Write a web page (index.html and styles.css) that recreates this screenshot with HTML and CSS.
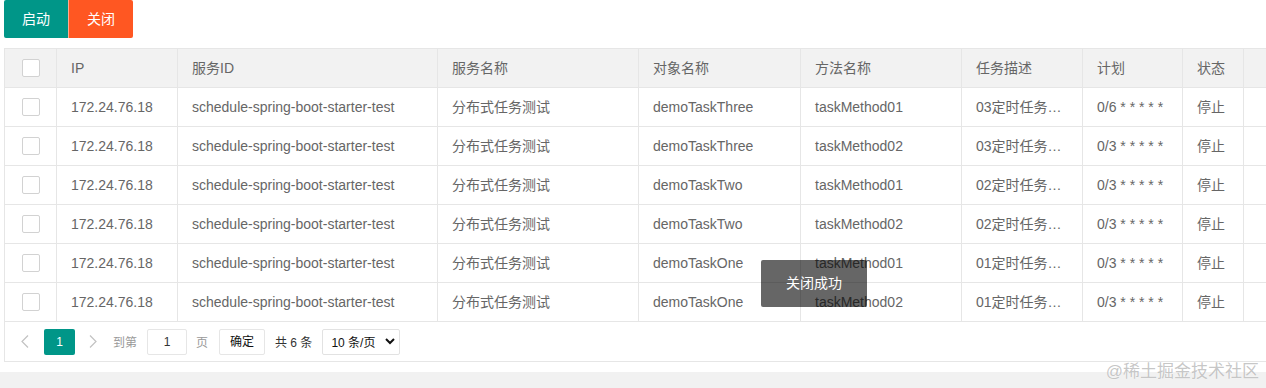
FILE: index.html
```html
<!DOCTYPE html>
<html lang="zh-CN">
<head>
  <meta charset="UTF-8">
  <meta name="viewport" content="width=device-width, initial-scale=1.0">
  <title>定时任务管理</title>
  <link rel="stylesheet" href="styles.css">
</head>
<body>
  <div id="main-content">
    <div class="btn-group">
      <button class="btn btn-start">启动</button>
      <button class="btn btn-stop">关闭</button>
    </div>

    <div class="table-view">
      <div class="table-row table-head">
        <div class="cell cell-check"><span class="checkbox"></span></div>
        <div class="cell">IP</div>
        <div class="cell">服务ID</div>
        <div class="cell">服务名称</div>
        <div class="cell">对象名称</div>
        <div class="cell">方法名称</div>
        <div class="cell">任务描述</div>
        <div class="cell">计划</div>
        <div class="cell">状态</div>
        <div class="cell cell-fill"></div>
      </div>

      <div class="table-row">
        <div class="cell cell-check"><span class="checkbox"></span></div>
        <div class="cell">172.24.76.18</div>
        <div class="cell">schedule-spring-boot-starter-test</div>
        <div class="cell">分布式任务测试</div>
        <div class="cell">demoTaskThree</div>
        <div class="cell">taskMethod01</div>
        <div class="cell">03定时任务测试</div>
        <div class="cell">0/6 * * * * *</div>
        <div class="cell">停止</div>
        <div class="cell cell-fill"></div>
      </div>
      <div class="table-row">
        <div class="cell cell-check"><span class="checkbox"></span></div>
        <div class="cell">172.24.76.18</div>
        <div class="cell">schedule-spring-boot-starter-test</div>
        <div class="cell">分布式任务测试</div>
        <div class="cell">demoTaskThree</div>
        <div class="cell">taskMethod02</div>
        <div class="cell">03定时任务测试</div>
        <div class="cell">0/3 * * * * *</div>
        <div class="cell">停止</div>
        <div class="cell cell-fill"></div>
      </div>
      <div class="table-row">
        <div class="cell cell-check"><span class="checkbox"></span></div>
        <div class="cell">172.24.76.18</div>
        <div class="cell">schedule-spring-boot-starter-test</div>
        <div class="cell">分布式任务测试</div>
        <div class="cell">demoTaskTwo</div>
        <div class="cell">taskMethod01</div>
        <div class="cell">02定时任务测试</div>
        <div class="cell">0/3 * * * * *</div>
        <div class="cell">停止</div>
        <div class="cell cell-fill"></div>
      </div>
      <div class="table-row">
        <div class="cell cell-check"><span class="checkbox"></span></div>
        <div class="cell">172.24.76.18</div>
        <div class="cell">schedule-spring-boot-starter-test</div>
        <div class="cell">分布式任务测试</div>
        <div class="cell">demoTaskTwo</div>
        <div class="cell">taskMethod02</div>
        <div class="cell">02定时任务测试</div>
        <div class="cell">0/3 * * * * *</div>
        <div class="cell">停止</div>
        <div class="cell cell-fill"></div>
      </div>
      <div class="table-row">
        <div class="cell cell-check"><span class="checkbox"></span></div>
        <div class="cell">172.24.76.18</div>
        <div class="cell">schedule-spring-boot-starter-test</div>
        <div class="cell">分布式任务测试</div>
        <div class="cell">demoTaskOne</div>
        <div class="cell">taskMethod01</div>
        <div class="cell">01定时任务测试</div>
        <div class="cell">0/3 * * * * *</div>
        <div class="cell">停止</div>
        <div class="cell cell-fill"></div>
      </div>
      <div class="table-row">
        <div class="cell cell-check"><span class="checkbox"></span></div>
        <div class="cell">172.24.76.18</div>
        <div class="cell">schedule-spring-boot-starter-test</div>
        <div class="cell">分布式任务测试</div>
        <div class="cell">demoTaskOne</div>
        <div class="cell">taskMethod02</div>
        <div class="cell">01定时任务测试</div>
        <div class="cell">0/3 * * * * *</div>
        <div class="cell">停止</div>
        <div class="cell cell-fill"></div>
      </div>

      <!-- pagination -->
      <div class="table-page">
        <span class="page-arrow page-prev">
          <svg width="8" height="13" viewBox="0 0 8 13"><path d="M7 0.5 L1 6.5 L7 12.5" fill="none" stroke="#c2c2c2" stroke-width="1.2"/></svg>
        </span>
        <span class="page-curr">1</span>
        <span class="page-arrow page-next">
          <svg width="8" height="13" viewBox="0 0 8 13"><path d="M1 0.5 L7 6.5 L1 12.5" fill="none" stroke="#c2c2c2" stroke-width="1.2"/></svg>
        </span>
        <span class="page-skip">到第</span>
        <span class="page-input">1</span>
        <span class="page-skip page-unit">页</span>
        <span class="page-btn">确定</span>
        <span class="page-count">共 6 条</span>
        <span class="page-limit">
          10 条/页
          <svg width="10" height="7" viewBox="0 0 10 7"><path d="M1 1 L5 5 L9 1" fill="none" stroke="#111" stroke-width="2"/></svg>
        </span>
      </div>
    </div>
  </div>

  <div class="scroll-band"></div>

  <div class="toast">关闭成功</div>
  <div class="watermark">@稀土掘金技术社区</div>
</body>
</html>
```

FILE: styles.css
```css
body {
  margin: 0;
  font-family: "Liberation Sans", Arial, "Noto Sans CJK SC", sans-serif;
  font-size: 14px;
  color: #666;
  background-color: #fff;
  overflow: hidden;
  height: 388px;
  position: relative;
}

#main-content {
  padding-left: 4px;
  width: 1300px;
}

.btn-group {
  display: flex;
  height: 38px;
}

.btn {
  height: 38px;
  line-height: 38px;
  padding: 0 18px;
  border: none;
  font-family: inherit;
  font-size: 14px;
  color: #fff;
  cursor: pointer;
}

.btn-start {
  background-color: #009688;
  border-radius: 2px 0 0 2px;
}

.btn-stop {
  background-color: #FF5722;
  border-left: 1px solid rgba(255, 255, 255, 0.5);
  border-radius: 0 2px 2px 0;
}

.table-view {
  margin-top: 10px;
  border: 1px solid #e6e6e6;
  border-right: none;
}

.table-row {
  display: grid;
  grid-template-columns: 52px 121px 260px 201px 162px 161px 121px 100px 61px 1fr;
}

.cell {
  box-sizing: border-box;
  height: 39px;
  line-height: 38px;
  padding: 0 14px;
  border-right: 1px solid #e6e6e6;
  border-bottom: 1px solid #e6e6e6;
  white-space: nowrap;
  overflow: hidden;
  text-overflow: ellipsis;
}

.table-head .cell {
  background-color: #f2f2f2;
}

.cell-check {
  display: flex;
  align-items: center;
  justify-content: center;
  padding: 0;
}

.checkbox {
  box-sizing: border-box;
  width: 18px;
  height: 18px;
  border: 1px solid #d2d2d2;
  border-radius: 2px;
  background-color: #fff;
}

.table-page {
  display: flex;
  align-items: center;
  height: 39px;
  font-size: 12px;
  color: #333;
}

.page-arrow {
  display: flex;
  align-items: center;
  justify-content: center;
  width: 30px;
  height: 26px;
}

.page-prev {
  margin-left: 5px;
}

.page-next {
  margin-left: 3px;
}

.page-curr {
  margin-left: 4px;
  width: 31px;
  height: 26px;
  line-height: 26px;
  text-align: center;
  color: #fff;
  background-color: #009688;
  border-radius: 2px;
}

.page-skip {
  margin-left: 5px;
  color: #999;
}

.page-unit {
  margin-left: 9px;
}

.page-input {
  box-sizing: border-box;
  margin-left: 10px;
  width: 40px;
  height: 26px;
  line-height: 24px;
  text-align: center;
  border: 1px solid #e6e6e6;
  border-radius: 2px;
}

.page-btn {
  box-sizing: border-box;
  margin-left: 11px;
  width: 46px;
  height: 26px;
  line-height: 24px;
  text-align: center;
  border: 1px solid #e6e6e6;
  border-radius: 2px;
  color: #111;
}

.page-count {
  margin-left: 10px;
}

.page-limit {
  box-sizing: border-box;
  display: flex;
  align-items: center;
  justify-content: space-between;
  margin-left: 10px;
  width: 78px;
  height: 26px;
  padding: 0 4px 0 8px;
  border: 1px solid #e2e2e2;
  border-radius: 2px;
  color: #111;
}

.scroll-band {
  margin-top: 10px;
  height: 20px;
  background-color: #f1f1f1;
}

.toast {
  position: absolute;
  left: 761px;
  top: 260px;
  width: 106px;
  height: 47px;
  line-height: 47px;
  text-align: center;
  font-size: 14px;
  color: #fff;
  background-color: rgba(0, 0, 0, 0.6);
  border-radius: 2px;
}

.watermark {
  position: absolute;
  right: 7px;
  bottom: 6px;
  font-size: 17px;
  line-height: 20px;
  color: rgba(150, 150, 150, 0.55);
  text-shadow: 0 0 1px #fff;
}
```
